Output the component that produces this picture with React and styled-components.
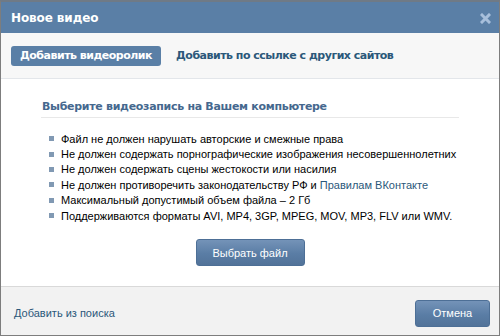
import React from "react";
import styled, { createGlobalStyle } from "styled-components";

const Global = createGlobalStyle`
  html, body { margin: 0; padding: 0; background: #fff; }
  body { font-family: Tahoma, "DejaVu Sans", "Liberation Sans", sans-serif; }
`;

const Frame = styled.div`
  box-sizing: border-box;
  width: 500px;
  height: 336px;
  border: 1px solid #7d7d7d;
  border-top: 2px solid #6f7a86;
  display: flex;
  flex-direction: column;
  background: #f7f7f7;
`;

const Header = styled.div`
  height: 31px;
  background: #5a7fa6;
  display: flex;
  align-items: center;
  justify-content: space-between;
  padding: 0 8px 0 10px;
  flex-shrink: 0;
`;

const Title = styled.div`
  color: #fff;
  font-family: "DejaVu Sans", sans-serif;
  font-weight: bold;
  font-size: 12px;
  letter-spacing: -0.1px;
`;

const Close = styled.svg`
  width: 11px;
  height: 11px;
  margin-top: 1px;
`;

const Tabs = styled.div`
  display: flex;
  align-items: center;
  gap: 15px;
  padding: 13px 10px 12px 10px;
  border-bottom: 1px solid #e3e6ea;
`;

const Tab = styled.div`
  font-family: "DejaVu Sans", sans-serif;
  font-weight: bold;
  font-size: 11px;
  letter-spacing: -0.5px;
  height: 20px;
  line-height: 20px;
  padding: 0 9px;
  border-radius: 3px;
  color: ${(p) => (p.$active ? "#fff" : "#2b587a")};
  background: ${(p) => (p.$active ? "#5a7fa6" : "transparent")};
  padding-left: ${(p) => (p.$active ? "9px" : "0")};
`;

const Content = styled.div`
  flex: 1;
  background: #fff;
  padding: 21px 40px 0 40px;
  display: flex;
  flex-direction: column;
`;

const Heading = styled.div`
  font-family: "DejaVu Sans", sans-serif;
  font-weight: bold;
  font-size: 11px;
  letter-spacing: -0.3px;
  color: #45688e;
  padding: 0 0 4px 1px;
  border-bottom: 1px solid #e8e8e8;
`;

const List = styled.ul`
  list-style: none;
  margin: 13px 0 0 0;
  padding: 0 0 0 8px;
`;

const Item = styled.li`
  display: flex;
  align-items: center;
  gap: 7px;
  height: 15.4px;
  font-family: "Liberation Sans", sans-serif;
  font-size: 11px;
  color: #000;
  white-space: nowrap;
  &::before {
    content: "";
    width: 5px;
    height: 5px;
    background: #8199b3;
    flex-shrink: 0;
  }
`;

const Link = styled.span`
  color: #2b587a;
`;

const ButtonRow = styled.div`
  display: flex;
  justify-content: center;
  margin-top: 16px;
`;

const Button = styled.div`
  box-sizing: border-box;
  height: 27px;
  padding: 0 14px;
  display: flex;
  align-items: center;
  justify-content: center;
  color: #fff;
  font-family: "Liberation Sans", sans-serif;
  font-size: 11px;
  border-radius: 3px;
  border: 1px solid #4d6f96;
  background: linear-gradient(#7493b8, #5a7da5 55%, #527399);
  width: ${(p) => p.$w}px;
`;

const Footer = styled.div`
  height: 49px;
  flex-shrink: 0;
  background: #f2f2f2;
  border-top: 1px solid #d9d9d9;
  display: flex;
  align-items: center;
  justify-content: space-between;
  box-sizing: border-box;
  padding: 4px 9px 0 13px;
`;

const FooterLink = styled.div`
  font-family: "Liberation Sans", sans-serif;
  font-size: 11px;
  color: #2b587a;
`;

export default function App() {
  return (
    <>
      <Global />
      <Frame>
        <Header>
          <Title>Новое видео</Title>
          <Close viewBox="0 0 11 11">
            <path d="M2 2 L9 9 M9 2 L2 9" stroke="#a7bfdb" strokeWidth="3" strokeLinecap="square" />
          </Close>
        </Header>
        <Tabs>
          <Tab $active>Добавить видеоролик</Tab>
          <Tab>Добавить по ссылке с других сайтов</Tab>
        </Tabs>
        <Content>
          <Heading>Выберите видеозапись на Вашем компьютере</Heading>
          <List>
            <Item>Файл не должен нарушать авторские и смежные права</Item>
            <Item>Не должен содержать порнографические изображения несовершеннолетних</Item>
            <Item>Не должен содержать сцены жестокости или насилия</Item>
            <Item>
              <span>
                Не должен противоречить законодательству РФ и <Link>Правилам ВКонтакте</Link>
              </span>
            </Item>
            <Item>Максимальный допустимый объем файла – 2 Гб</Item>
            <Item>Поддерживаются форматы AVI, MP4, 3GP, MPEG, MOV, MP3, FLV или WMV.</Item>
          </List>
          <ButtonRow>
            <Button $w={109}>Выбрать файл</Button>
          </ButtonRow>
        </Content>
        <Footer>
          <FooterLink>Добавить из поиска</FooterLink>
          <Button $w={75}>Отмена</Button>
        </Footer>
      </Frame>
    </>
  );
}
